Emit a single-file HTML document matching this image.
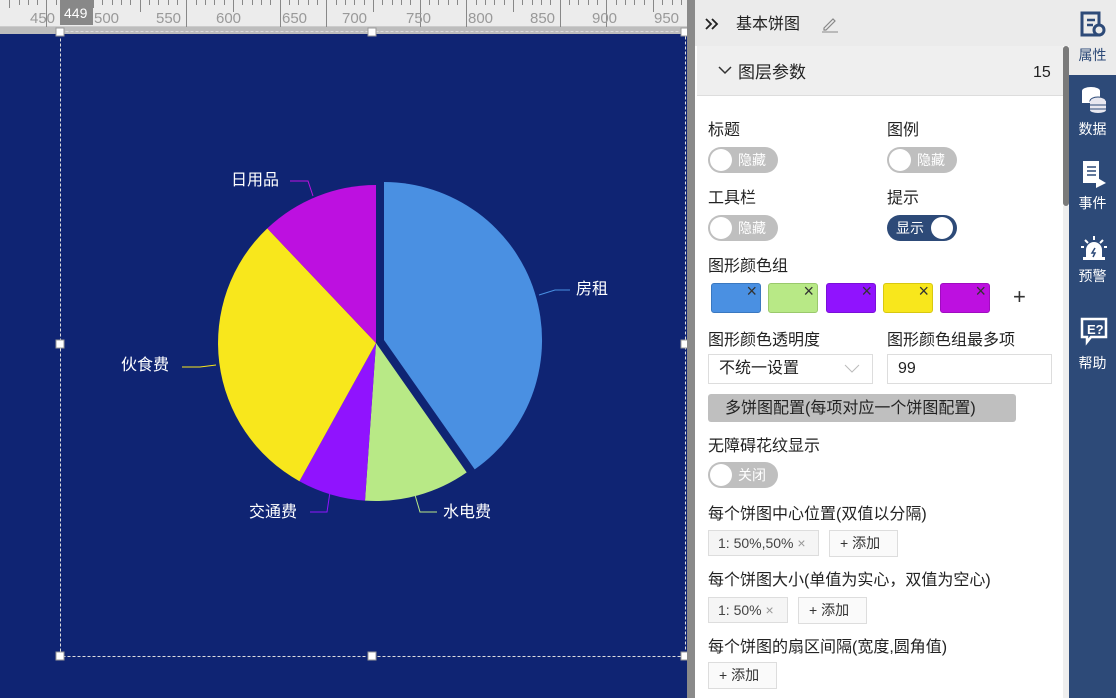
<!DOCTYPE html>
<html><head><meta charset="utf-8"><style>
*{margin:0;padding:0;box-sizing:border-box}
body{width:1116px;height:698px;overflow:hidden;position:relative;font-family:"Liberation Sans","Noto Sans CJK SC",sans-serif;background:#0f2473}
.abs{position:absolute}
.lbl{position:absolute;font-size:16px;color:#222;line-height:18px}
.tg{position:absolute;width:70px;height:26px;border-radius:13px;background:#bfbfbf;color:#fff;font-size:14px;line-height:26px}
.tg .k{position:absolute;top:2px;left:2px;width:22px;height:22px;border-radius:50%;background:#fff}
.tg span{position:absolute;left:30px}
.sw{position:absolute;top:283px;width:50px;height:30px;border-radius:3px}
.sw i{position:absolute;right:3px;top:-3px;font-style:normal;font-size:18px;color:#333}
.tag{position:absolute;height:26px;border:1px solid #ddd;background:#f5f5f5;font-size:14px;color:#444;line-height:24px;padding-left:9px}
.add{position:absolute;height:27px;border:1px solid #ddd;background:#fafafa;font-size:14px;color:#333;line-height:25px;padding-left:10px}
.nav{position:absolute;left:1069px;width:47px;text-align:center;color:#fff;font-size:14px}
</style></head><body>
<div class="abs" style="left:0;top:0;width:687px;height:27px;background:#ececec;border-bottom:1px solid #ccc"></div>
<svg class="abs" style="left:0;top:0" width="687" height="34">
<g stroke="#888" stroke-width="1">
<path d="M9.5 0v8M19.5 0v5M28.5 0v5M37.5 0v5M46.5 0v27M56.5 0v5M65.5 0v5M74.5 0v5M84.5 0v5M93.5 0v8M102.5 0v5M112.5 0v5M121.5 0v5M130.5 0v5M140.5 0v12M149.5 0v5M158.5 0v5M168.5 0v5M177.5 0v5M186.5 0v27M196.5 0v5M205.5 0v5M214.5 0v5M224.5 0v5M233.5 0v12M242.5 0v5M252.5 0v5M261.5 0v5M270.5 0v5M280.5 0v27M289.5 0v5M298.5 0v5M308.5 0v5M317.5 0v5M326.5 0v27M336.5 0v5M345.5 0v5M354.5 0v5M364.5 0v5M373.5 0v12M382.5 0v5M392.5 0v5M401.5 0v5M410.5 0v5M420.5 0v27M429.5 0v5M438.5 0v5M448.5 0v5M457.5 0v5M466.5 0v27M476.5 0v5M485.5 0v5M494.5 0v5M504.5 0v5M513.5 0v12M522.5 0v5M532.5 0v5M541.5 0v5M550.5 0v5M560.5 0v27M569.5 0v5M578.5 0v5M588.5 0v5M597.5 0v5M606.5 0v27M616.5 0v5M625.5 0v5M634.5 0v5M644.5 0v5M653.5 0v12M662.5 0v5M672.5 0v5M681.5 0v5"/>
</g>
<rect x="60" y="0" width="33" height="25" fill="#888"/>
<g font-family="Liberation Sans" font-size="15" fill="#999">
<text x="30" y="23">450</text><text x="94" y="23">500</text><text x="156" y="23">550</text><text x="216" y="23">600</text><text x="282" y="23">650</text><text x="342" y="23">700</text><text x="406" y="23">750</text><text x="468" y="23">800</text><text x="530" y="23">850</text><text x="592" y="23">900</text><text x="654" y="23">950</text>
</g>
<text x="64" y="18" font-family="Liberation Sans" font-size="14" fill="#fff">449</text>
<rect x="0" y="27" width="687" height="7" fill="#bdbdbd"/>
</svg>
<div class="abs" style="left:687px;top:0;width:8px;height:698px;background:#8a8a8a"></div>
<svg class="abs" style="left:0;top:0" width="687" height="698">
<rect x="60.5" y="31.5" width="625" height="625" fill="none" stroke="#ddd" stroke-dasharray="3,2"/>
<g fill="#fff" stroke="#999"><rect x="56" y="28" width="8" height="8"/><rect x="368" y="28" width="8" height="8"/><rect x="681" y="28" width="8" height="8"/><rect x="56" y="340" width="8" height="8"/><rect x="681" y="340" width="8" height="8"/><rect x="56" y="652" width="8" height="8"/><rect x="368" y="652" width="8" height="8"/><rect x="681" y="652" width="8" height="8"/></g>
<path d="M384 340L384 182A158 158 0 0 1 474.7 469.4Z" fill="#4a90e2"/>
<path d="M376 343L466.7 472.4A158 158 0 0 1 365 500.6Z" fill="#b8e986"/>
<path d="M376 343L365 500.6A158 158 0 0 1 299.4 481.2Z" fill="#9013fe"/>
<path d="M376 343L299.4 481.2A158 158 0 0 1 267.3 228.4Z" fill="#f8e71c"/>
<path d="M376 343L267.3 228.4A158 158 0 0 1 376 185Z" fill="#bd10e0"/>
<g fill="none" stroke-width="1">
<path d="M539 295L555 290H570" stroke="#4a90e2"/>
<path d="M415 495L420 512H437" stroke="#b8e986"/>
<path d="M330 492L327 512H310" stroke="#9013fe"/>
<path d="M216 365L200 367H182" stroke="#f8e71c"/>
<path d="M313 196L308 181H290" stroke="#bd10e0"/>
</g>
<g font-family="Liberation Sans,Noto Sans CJK SC,sans-serif" font-size="16" fill="#fff">
<text x="576" y="294">房租</text><text x="443" y="517">水电费</text><text x="249" y="517">交通费</text><text x="121" y="370">伙食费</text><text x="231" y="185">日用品</text>
</g>
</svg>
<div class="abs" style="left:695px;top:0;width:374px;height:698px;background:#fff"></div>
<div class="abs" style="left:695px;top:0;width:374px;height:46px;background:#ebebeb"></div>
<svg class="abs" style="left:704px;top:17px" width="16" height="14"><path d="M2 2l5 5-5 5M8 2l5 5-5 5" fill="none" stroke="#222" stroke-width="1.8"/></svg>
<div class="abs" style="left:736px;top:15px;font-size:16px;color:#222;line-height:20px">基本饼图</div>
<svg class="abs" style="left:820px;top:15px" width="20" height="18"><path d="M4 13L13 4l2 2-9 9H4z" fill="none" stroke="#888" stroke-width="1.2"/><path d="M2 17h16" stroke="#888"/></svg>
<div class="abs" style="left:697px;top:46px;width:366px;height:50px;background:#efefef;border-bottom:1px solid #ddd"></div>
<svg class="abs" style="left:718px;top:66px" width="14" height="10"><path d="M1 1l6 6 6-6" fill="none" stroke="#333" stroke-width="1.5"/></svg>
<div class="abs" style="left:738px;top:63px;font-size:17px;color:#222;line-height:20px">图层参数</div>
<div class="abs" style="left:1033px;top:64px;font-size:16px;color:#222;line-height:18px">15</div>
<div class="abs" style="left:1063px;top:46px;width:6px;height:160px;background:#7a7a7a;border-radius:3px"></div>

<div class="lbl" style="left:708px;top:122px">标题</div>
<div class="lbl" style="left:887px;top:122px">图例</div>
<div class="tg" style="left:708px;top:147px"><div class="k"></div><span>隐藏</span></div>
<div class="tg" style="left:887px;top:147px"><div class="k"></div><span>隐藏</span></div>
<div class="lbl" style="left:708px;top:190px">工具栏</div>
<div class="lbl" style="left:887px;top:190px">提示</div>
<div class="tg" style="left:708px;top:215px"><div class="k"></div><span>隐藏</span></div>
<div class="tg" style="left:887px;top:215px;background:#2d4a78"><div class="k" style="left:44px"></div><span style="left:9px">显示</span></div>
<div class="lbl" style="left:708px;top:258px">图形颜色组</div>
<div class="sw" style="left:711px;background:#4a90e2;border:1px solid #3a78c0"><i>×</i></div>
<div class="sw" style="left:768px;background:#b8e986;border:1px solid #9ac96c"><i>×</i></div>
<div class="sw" style="left:826px;background:#9013fe;border:1px solid #7a10d8"><i>×</i></div>
<div class="sw" style="left:883px;background:#f8e71c;border:1px solid #d8c810"><i>×</i></div>
<div class="sw" style="left:940px;background:#bd10e0;border:1px solid #a00cc0"><i>×</i></div>
<div class="abs" style="left:1013px;top:284px;font-size:22px;color:#333">+</div>
<div class="lbl" style="left:708px;top:332px">图形颜色透明度</div>
<div class="lbl" style="left:887px;top:332px">图形颜色组最多项</div>
<div class="abs" style="left:708px;top:354px;width:165px;height:30px;border:1px solid #ddd;font-size:16px;color:#222;padding:5px 10px;line-height:18px">不统一设置</div>
<svg class="abs" style="left:844px;top:364px" width="16" height="10"><path d="M1 1l7 7 7-7" fill="none" stroke="#bbb"/></svg>
<div class="abs" style="left:887px;top:354px;width:165px;height:30px;border:1px solid #ddd;font-size:16px;color:#222;padding:5px 10px;line-height:18px">99</div>
<div class="abs" style="left:708px;top:394px;width:308px;height:28px;background:#bfbfbf;border-radius:3px;font-size:16px;color:#222;line-height:30px;padding-left:17px">多饼图配置(每项对应一个饼图配置)</div>
<div class="lbl" style="left:708px;top:438px">无障碍花纹显示</div>
<div class="tg" style="left:708px;top:462px"><div class="k"></div><span>关闭</span></div>
<div class="lbl" style="left:708px;top:506px">每个饼图中心位置(双值以分隔)</div>
<div class="tag" style="left:708px;top:530px;width:111px">1: 50%,50% <span style="color:#999">×</span></div>
<div class="add" style="left:829px;top:530px;width:69px">+ 添加</div>
<div class="lbl" style="left:708px;top:572px">每个饼图大小(单值为实心，双值为空心)</div>
<div class="tag" style="left:708px;top:597px;width:80px">1: 50% <span style="color:#999">×</span></div>
<div class="add" style="left:798px;top:597px;width:69px">+ 添加</div>
<div class="lbl" style="left:708px;top:639px">每个饼图的扇区间隔(宽度,圆角值)</div>
<div class="add" style="left:708px;top:662px;width:69px">+ 添加</div>
<div class="abs" style="left:1063px;top:206px;width:6px;height:492px;background:#eee"></div>

<div class="abs" style="left:1069px;top:0;width:47px;height:698px;background:#2d4a78"></div>
<div class="abs" style="left:1069px;top:0;width:47px;height:75px;background:#ebebeb"></div>
<svg class="abs" style="left:1080px;top:11px" width="28" height="28"><rect x="2" y="2" width="17" height="22" fill="none" stroke="#2d4a78" stroke-width="3"/><path d="M7 9h8M7 14h6" stroke="#2d4a78" stroke-width="2.5"/><circle cx="19" cy="19" r="5" fill="#ebebeb" stroke="#2d4a78" stroke-width="3"/></svg>
<div class="nav" style="top:45px;color:#2d4a78">属性</div>
<svg class="abs" style="left:1080px;top:85px" width="28" height="28"><ellipse cx="11" cy="6" rx="9" ry="4" fill="#fff"/><rect x="2" y="6" width="18" height="12" fill="#fff"/><ellipse cx="18" cy="16" rx="8" ry="4" fill="#e8e8f0" stroke="#2d4a78"/><rect x="10" y="16" width="16" height="9" fill="#e8e8f0"/><ellipse cx="18" cy="25" rx="8" ry="3" fill="#e8e8f0"/><path d="M10 20h16M10 24h16" stroke="#2d4a78"/></svg>
<div class="nav" style="top:119px">数据</div>
<svg class="abs" style="left:1080px;top:159px" width="28" height="30"><rect x="3" y="2" width="16" height="22" fill="#fff"/><path d="M7 8h9M7 12h9M7 16h9" stroke="#2d4a78" stroke-width="1.5"/><path d="M16 18l10 6-10 5z" fill="#fff"/></svg>
<div class="nav" style="top:193px">事件</div>
<svg class="abs" style="left:1080px;top:234px" width="28" height="28"><path d="M6 24V16a8 8 0 0 1 16 0v8z" fill="#fff"/><rect x="3" y="23" width="22" height="3" fill="#fff"/><path d="M14 2v4M5 6l3 3M23 6l-3 3M1 13h3M24 13h3" stroke="#fff" stroke-width="2"/><path d="M15 14l-3 5h3l-2 4" stroke="#2d4a78" stroke-width="1.5" fill="none"/></svg>
<div class="nav" style="top:266px">预警</div>
<svg class="abs" style="left:1079px;top:316px" width="30" height="30"><path d="M3 3h24v18H12l-4 5v-5H3z" fill="none" stroke="#fff" stroke-width="2.5"/><text x="8" y="18" fill="#fff" font-size="13" font-family="Liberation Sans" font-weight="bold">E?</text></svg>
<div class="nav" style="top:353px">帮助</div>
</body></html>
